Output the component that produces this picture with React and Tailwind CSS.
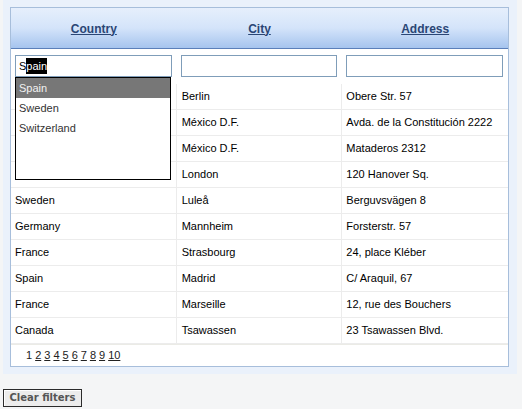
import React, { useState } from "react";

// first four country cells sit under the open autocomplete list
const rows = [
  { country: "", city: "Berlin", address: "Obere Str. 57" },
  { country: "", city: "México D.F.", address: "Avda. de la Constitución 2222" },
  { country: "", city: "México D.F.", address: "Mataderos 2312" },
  { country: "", city: "London", address: "120 Hanover Sq." },
  { country: "Sweden", city: "Luleå", address: "Berguvsvägen 8" },
  { country: "Germany", city: "Mannheim", address: "Forsterstr. 57" },
  { country: "France", city: "Strasbourg", address: "24, place Kléber" },
  { country: "Spain", city: "Madrid", address: "C/ Araquil, 67" },
  { country: "France", city: "Marseille", address: "12, rue des Bouchers" },
  { country: "Canada", city: "Tsawassen", address: "23 Tsawassen Blvd." },
];

const suggestions = ["Spain", "Sweden", "Switzerland"];

export default function App() {
  const [active, setActive] = useState(0);

  return (
    <div
      className="w-[522px] h-[409px] bg-[#f4f5f6] pl-[3px] text-[11px] text-black"
      style={{ fontFamily: '"Liberation Sans", Arial, sans-serif' }}
    >
      {/* Grid panel */}
      <div className="w-[514px] bg-[#eaf1fb] pt-[7px] pb-[7px] pl-[7px] pr-[8px]">
        <div className="relative border border-[#a7bedb] bg-white">
          {/* Header */}
          <div className="grid grid-cols-3 h-[41px] border-b border-[#5b7fba] bg-gradient-to-b from-[#e6effc] via-[#d4e4fa] to-[#a6c4ee]">
            {["Country", "City", "Address"].map((h) => (
              <div key={h} className="flex items-center justify-center pt-[1px]">
                <a className="text-[12px] font-bold text-[#2a4675] underline cursor-pointer">
                  {h}
                </a>
              </div>
            ))}
          </div>

          {/* Filter row */}
          <div className="grid grid-cols-3 h-[35px]">
            <div className="pl-[4px] pr-[5px] pt-[6px]">
              <div className="h-[22px] border border-[#7f9db9] bg-white pl-[3px] flex items-center">
                <span>S</span>
                <span className="bg-black text-white">pain</span>
              </div>
            </div>
            <div className="pl-[4px] pr-[5px] pt-[6px]">
              <div className="h-[22px] border border-[#7f9db9] bg-white" />
            </div>
            <div className="pl-[4px] pr-[5px] pt-[6px]">
              <div className="h-[22px] border border-[#7f9db9] bg-white" />
            </div>
          </div>

          {/* Data rows */}
          {rows.map((r, i) => (
            <div key={i} className="grid grid-cols-3 h-[26px] border-b border-[#ececec]">
              <div className="flex items-center pl-[4px] border-r border-[#ececec]">{r.country}</div>
              <div className="flex items-center pl-[5px] border-r border-[#ececec]">{r.city}</div>
              <div className="flex items-center pl-[4px]">{r.address}</div>
            </div>
          ))}

          {/* Pager */}
          <div className="h-[22px] border-t border-[#ebebe6] flex items-center pl-[15px] gap-[3px] text-[#222]">
            <span>1</span>
            {[2, 3, 4, 5, 6, 7, 8, 9, 10].map((n) => (
              <a key={n} className="underline cursor-pointer">
                {n}
              </a>
            ))}
          </div>

          {/* Autocomplete dropdown */}
          <div className="absolute left-[4px] top-[69px] w-[156px] h-[103px] border border-black bg-white text-[#333]">
            {suggestions.map((s, i) => (
              <div
                key={s}
                onMouseEnter={() => setActive(i)}
                className={`h-[20px] flex items-center pl-[3px] ${
                  active === i ? "bg-[#777777] text-[#f2f2f2]" : ""
                }`}
              >
                {s}
              </div>
            ))}
          </div>
        </div>
      </div>

      {/* Clear filters */}
      <div className="pt-[15px]">
        <button
          className="h-[18px] w-[79px] border border-[#2b2b2b] bg-[#ececec] shadow-[inset_1px_1px_0_#ffffff] text-[10px] font-bold text-[#555] leading-none flex items-center justify-center"
          style={{ fontFamily: '"DejaVu Sans", Verdana, sans-serif' }}
        >
          Clear filters
        </button>
      </div>
    </div>
  );
}
